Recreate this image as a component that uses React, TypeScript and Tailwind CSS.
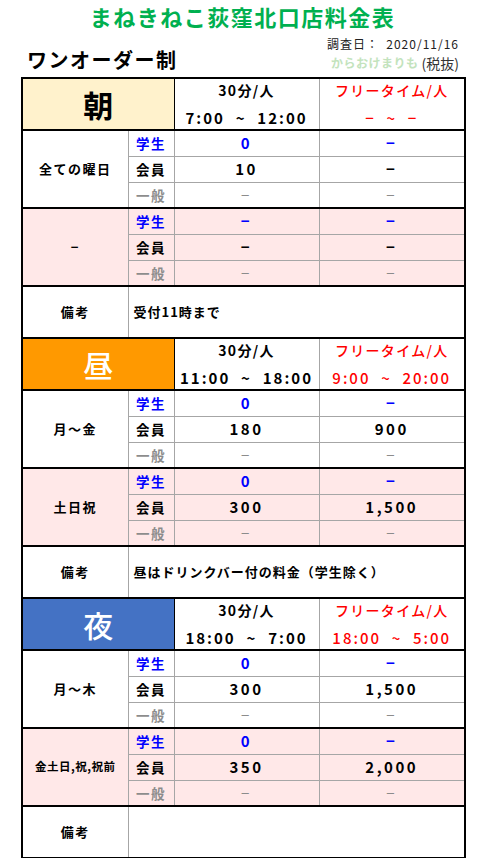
import React from 'react';

type Group = { name: string; pink: boolean; small?: boolean; vals: [string, string][] };
type Section = {
  label: string;
  labelCls: string;
  time: string;
  free: string;
  groups: Group[];
  note: string;
};

const D = '−';

const sections: Section[] = [
  {
    label: '朝',
    labelCls: 'bg-[#fff2cc] text-black font-bold',
    time: '7:00 ~ 12:00',
    free: `${D} ~ ${D}`,
    groups: [
      { name: '全ての曜日', pink: false, vals: [['0', D], ['10', D], [D, D]] },
      { name: D, pink: true, vals: [[D, D], [D, D], [D, D]] },
    ],
    note: '受付11時まで',
  },
  {
    label: '昼',
    labelCls: 'bg-[#ff9900] text-white font-medium',
    time: '11:00 ~ 18:00',
    free: '9:00 ~ 20:00',
    groups: [
      { name: '月～金', pink: false, vals: [['0', D], ['180', '900'], [D, D]] },
      { name: '土日祝', pink: true, vals: [['0', D], ['300', '1,500'], [D, D]] },
    ],
    note: '昼はドリンクバー付の料金（学生除く）',
  },
  {
    label: '夜',
    labelCls: 'bg-[#4472c4] text-white font-medium',
    time: '18:00 ~ 7:00',
    free: '18:00 ~ 5:00',
    groups: [
      { name: '月～木', pink: false, vals: [['0', D], ['300', '1,500'], [D, D]] },
      { name: '金土日,祝,祝前', pink: true, small: true, vals: [['0', D], ['350', '2,000'], [D, D]] },
    ],
    note: '',
  },
];

const roles = ['学生', '会員', '一般'];
const roleColor = ['text-[#0000ff]', 'text-black', 'text-[#8c8c8c]'];

export default function App() {
  return (
    <div className="w-[485px] bg-white font-['Noto_Sans_CJK_JP',sans-serif] text-black">
      <div className="text-center text-[22px] leading-[32px] font-bold tracking-[1.5px] text-[#00b050]">
        まねきねこ荻窪北口店料金表
      </div>

      <div className="h-[45px] flex items-end justify-between pl-[27px] pr-[26px] pb-[5px]">
        <div className="text-[20px] leading-[24px] font-bold tracking-[1.5px]">ワンオーダー制</div>
        <div className="flex flex-col items-end">
          <div className="text-[12px] leading-[14px] text-[#222] tracking-[1px] whitespace-pre">
            {'調査日：  2020/11/16'}
          </div>
          <div className="flex items-center mt-[3px] leading-[18px]">
            <span className="text-[12px] font-bold text-[#c3e3bd] tracking-[0.5px]">からおけまりも</span>
            <span className="text-[14px] text-[#333] ml-[3px]">(税抜)</span>
          </div>
        </div>
      </div>

      <table className="ml-[21px] w-[443px] table-fixed border-collapse border-2 border-black">
        <colgroup>
          <col className="w-[106px]" />
          <col className="w-[46px]" />
          <col className="w-[145px]" />
          <col className="w-[146px]" />
        </colgroup>
        <tbody>
          {sections.map((s) => (
            <React.Fragment key={s.label}>
              <tr>
                <td
                  colSpan={2}
                  className={`h-[52px] p-0 text-center text-[30px] leading-none border-y-2 border-r border-black ${s.labelCls}`}
                >
                  {s.label}
                </td>
                <td className="p-0 align-top text-center font-bold border-y-2 border-black border-r border-r-[#a6a6a6]">
                  <div className="leading-[22px] text-[14px] tracking-[1.3px]">30分/人</div>
                  <div className="leading-[22px] mt-[6px] text-[15px] tracking-[2px] whitespace-pre">
                    {s.time.replace(' ~ ', '  ~  ')}
                  </div>
                </td>
                <td className="p-0 align-top text-center font-medium text-[#ff0000] border-y-2 border-black">
                  <div className="leading-[22px] text-[14px] tracking-[1.3px]">フリータイム/人</div>
                  <div className="leading-[22px] mt-[6px] text-[15px] tracking-[2px] whitespace-pre">
                    {s.free.replace(' ~ ', '  ~  ')}
                  </div>
                </td>
              </tr>
              {s.groups.map((g) =>
                g.vals.map((v, i) => {
                  const bg = g.pink ? 'bg-[#ffe8e8]' : 'bg-white';
                  const top = i === 0 ? 'border-t-2 border-t-black' : 'border-t border-t-[#a6a6a6]';
                  const weight = i === 2 ? 'font-normal' : 'font-bold';
                  return (
                    <tr key={g.name + i} className={bg}>
                      {i === 0 && (
                        <td
                          rowSpan={3}
                          className={`p-0 text-center font-bold border-t-2 border-t-black border-r border-r-[#a6a6a6] ${
                            g.small ? 'text-[11.5px] tracking-[0.5px]' : 'text-[13px] tracking-[1.5px]'
                          }`}
                        >
                          {g.name}
                        </td>
                      )}
                      <td
                        className={`h-[26px] p-0 text-center font-bold text-[13.5px] tracking-[1.5px] border-r border-r-[#a6a6a6] ${top} ${roleColor[i]}`}
                      >
                        {roles[i]}
                      </td>
                      <td
                        className={`p-0 text-center text-[15px] tracking-[2.5px] border-r border-r-[#a6a6a6] ${top} ${roleColor[i]} ${weight}`}
                      >
                        {v[0]}
                      </td>
                      <td className={`p-0 text-center text-[15px] tracking-[2.5px] ${top} ${roleColor[i]} ${weight}`}>
                        {v[1]}
                      </td>
                    </tr>
                  );
                })
              )}
              <tr>
                <td className="h-[52px] p-0 text-center font-bold text-[13px] tracking-[1.5px] border-t-2 border-t-black border-r border-r-[#a6a6a6]">
                  備考
                </td>
                <td
                  colSpan={3}
                  className="p-0 pl-[5px] text-left font-bold text-[13px] tracking-[1px] border-t-2 border-t-black"
                >
                  {s.note}
                </td>
              </tr>
            </React.Fragment>
          ))}
        </tbody>
      </table>
    </div>
  );
}
